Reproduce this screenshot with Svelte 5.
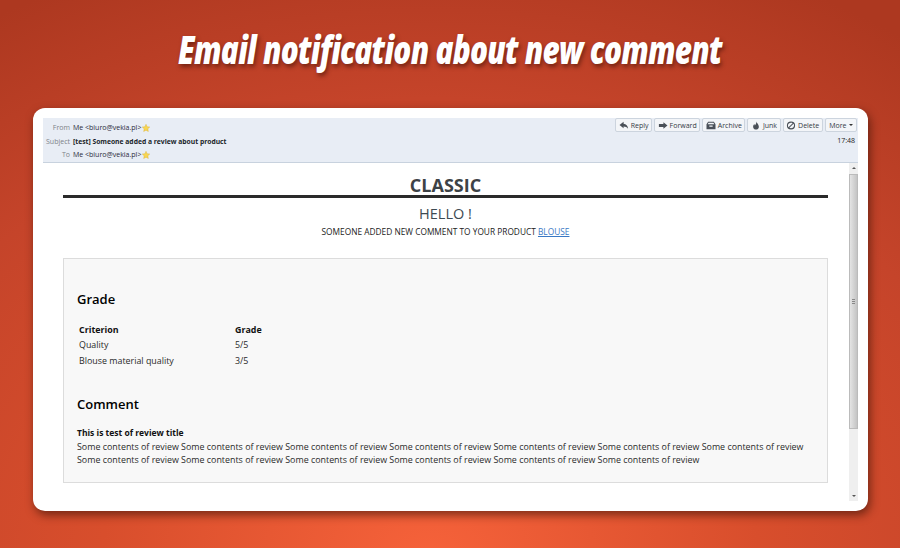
<script>
  const buttons = [
    { label: 'Reply', icon: 'reply' },
    { label: 'Forward', icon: 'forward' },
    { label: 'Archive', icon: 'archive' },
    { label: 'Junk', icon: 'junk' },
    { label: 'Delete', icon: 'delete' }
  ];

  const grades = [
    { name: 'Quality', grade: '5/5' },
    { name: 'Blouse material quality', grade: '3/5' }
  ];

  const line1 = Array(7).fill('Some contents of review').join(' ');
  const line2 = Array(6).fill('Some contents of review').join(' ');
</script>

{#snippet star()}
  <svg class="star" width="8" height="8" viewBox="0 0 10 10">
    <path d="M5 .4 6.4 3.4 9.7 3.8 7.3 6 7.9 9.4 5 7.7 2.1 9.4 2.7 6 .3 3.8 3.6 3.4Z" fill="#f7d654" stroke="#dcae2c" stroke-width=".5" />
  </svg>
{/snippet}

<div class="page">
  <h1>Email notification about new comment</h1>

  <div class="card">
    <div class="mail-head">
      <div class="fields">
        <div class="row"><span class="key">From</span><span class="val">Me &lt;biuro@vekia.pl&gt;</span>{@render star()}</div>
        <div class="row"><span class="key">Subject</span><span class="val subject">[test] Someone added a review about product</span></div>
        <div class="row"><span class="key">To</span><span class="val">Me &lt;biuro@vekia.pl&gt;</span>{@render star()}</div>
      </div>
      <div class="side">
        <div class="buttons">
          {#each buttons as b}
            <div class="btn">
              <svg width="10" height="9" viewBox="0 0 12 11" fill="#4a5058">
                {#if b.icon === 'reply'}
                  <path d="M5.5 1 .5 5 5.5 9V6.6C8 6.6 9.6 7.4 11 9.6 10.8 6 8.6 3.7 5.5 3.4Z" />
                {:else if b.icon === 'forward'}
                  <path d="M6.5 1.5 11.5 5.5 6.5 9.5V7.3H1V3.7H6.5Z" />
                {:else if b.icon === 'archive'}
                  <path d="M2.5 1H9.5L11.5 4V10H.5V4ZM3 2 2 4H10L9 2ZM4 5.5V7H8V5.5Z" fill-rule="evenodd" />
                {:else if b.icon === 'junk'}
                  <path d="M6.5 .5C6.8 2.5 9.5 4 9.5 7 9.5 9 8 10.5 6 10.5S2.5 9 2.5 7C2.5 5.6 3.2 4.6 4 3.8L4.6 5.4C5.6 4.2 6.6 2.5 6.5 .5Z" />
                {:else}
                  <path d="M6 .5A5 5 0 1 0 6 10.5 5 5 0 1 0 6 .5ZM6 2.2C6.7 2.2 7.4 2.4 8 2.8L2.9 7.6C2.5 7.1 2.3 6.3 2.3 5.5 2.3 3.6 4 2.2 6 2.2ZM4 8.3 9.1 3.5C9.5 4 9.7 4.7 9.7 5.5 9.7 7.4 8 8.8 6 8.8 5.2 8.8 4.5 8.6 4 8.3Z" fill-rule="evenodd" />
                {/if}
              </svg>
              {b.label}
            </div>
          {/each}
          <div class="btn more">More <span class="caret"></span></div>
        </div>
        <div class="time">17:48</div>
      </div>
    </div>

    <div class="mail-body">
      <div class="content">
        <div class="brand">CLASSIC</div>
        <div class="hello">HELLO !</div>
        <div class="lead">SOMEONE ADDED NEW COMMENT TO YOUR PRODUCT <a href="#blouse">BLOUSE</a></div>

        <div class="box">
          <h2>Grade</h2>
          <table>
            <thead>
              <tr><th>Criterion</th><th>Grade</th></tr>
            </thead>
            <tbody>
              {#each grades as g}
                <tr><td>{g.name}</td><td>{g.grade}</td></tr>
              {/each}
            </tbody>
          </table>

          <h2 class="comment">Comment</h2>
          <div class="review-title">This is test of review title</div>
          <p>{line1}<br />{line2}</p>
        </div>
      </div>

      <div class="scrollbar">
        <span class="arrow up"></span>
        <div class="track">
          <div class="thumb"><span class="grip"></span></div>
        </div>
        <span class="arrow down"></span>
      </div>
    </div>
  </div>
</div>

<style>
  :global(body) {
    margin: 0;
  }

  .page {
    width: 900px;
    height: 548px;
    box-sizing: border-box;
    padding-top: 108px;
    position: relative;
    overflow: hidden;
    background: radial-gradient(ellipse 820px 640px at 430px 560px, #f6623a 0%, #d84e2c 40%, #c5442a 72%, #ad3820 100%);
    font-family: "Open Sans", sans-serif;
  }

  h1 {
    position: absolute;
    top: 26px;
    left: 0;
    right: 0;
    margin: 0;
    text-align: center;
    color: #fff;
    font-size: 39px;
    line-height: 46px;
    font-weight: 800;
    font-style: italic;
    letter-spacing: -1px;
    white-space: nowrap;
    transform: scaleX(0.763);
    text-shadow: 2px 3px 5px rgba(60, 15, 5, 0.55);
  }

  .card {
    width: 835px;
    height: 403px;
    margin-left: 33px;
    box-sizing: border-box;
    padding: 10px;
    background: #fff;
    border-radius: 12px;
    box-shadow: 2px 4px 10px rgba(50, 15, 5, 0.6);
    display: flex;
    flex-direction: column;
  }

  .mail-head {
    height: 45px;
    box-sizing: border-box;
    background: #e8edf5;
    border-bottom: 1px solid #c8d2de;
    display: flex;
    justify-content: space-between;
    flex: none;
  }

  .fields {
    padding-top: 3px;
  }

  .row {
    display: flex;
    align-items: center;
    height: 13.5px;
    font-size: 7px;
    color: #2a2a3a;
  }

  .key {
    width: 27px;
    margin-right: 3px;
    text-align: right;
    color: #7d8288;
  }

  .subject {
    font-size: 6.75px;
    font-weight: 700;
    color: #1a1f2a;
  }

  .star {
    margin-left: 1px;
  }

  .side {
    display: flex;
    flex-direction: column;
    align-items: flex-end;
  }

  .buttons {
    display: flex;
    gap: 2px;
    padding-right: 1px;
  }

  .btn {
    height: 14px;
    box-sizing: border-box;
    padding: 0 2.5px;
    display: flex;
    align-items: center;
    gap: 2px;
    background: #f3f5f8;
    border: 1px solid #ccd4de;
    border-radius: 2px;
    font-size: 7px;
    color: #333a44;
  }

  .more {
    padding: 0 3.5px;
  }

  .caret {
    width: 0;
    height: 0;
    border: 2.5px solid transparent;
    border-top-color: #333;
    border-bottom: 0;
  }

  .time {
    font-size: 7px;
    color: #222;
    margin-top: 4px;
    padding-right: 3px;
  }

  .mail-body {
    flex: 1;
    min-height: 0;
    display: flex;
  }

  .content {
    flex: 1;
    padding: 0 21px 0 20px;
    color: #222;
  }

  .brand {
    height: 35px;
    box-sizing: border-box;
    border-bottom: 3px solid #2a2a2a;
    padding-top: 10px;
    text-align: center;
    font-size: 18px;
    line-height: 24px;
    font-weight: 700;
    color: #3d4246;
  }

  .hello {
    margin-top: 6px;
    text-align: center;
    font-size: 14.5px;
    line-height: 20px;
    color: #3d4a52;
  }

  .lead {
    margin-top: 1px;
    text-align: center;
    font-size: 8.33px;
    line-height: 14px;
    color: #222;
  }

  .lead a {
    color: #3a78c4;
  }

  .box {
    margin-top: 19px;
    height: 225px;
    box-sizing: border-box;
    padding: 31px 13px 0;
    background: #f8f8f8;
    border: 1px solid #dcdcdc;
  }

  h2 {
    margin: 0;
    font-size: 13px;
    line-height: 18px;
    font-weight: 600;
    color: #000;
  }

  table {
    margin-top: 14px;
    border-collapse: collapse;
    font-size: 8.88px;
    color: #2a2a2a;
  }

  th {
    font-weight: 700;
    text-align: left;
    color: #111;
  }

  th,
  td {
    height: 15.5px;
    padding: 0 2px;
  }

  th:first-child,
  td:first-child {
    width: 152px;
  }

  .comment {
    margin-top: 26px;
  }

  .review-title {
    margin-top: 13px;
    font-size: 8.5px;
    line-height: 13px;
    font-weight: 700;
    color: #111;
  }

  p {
    margin: 0;
    padding-top: 2px;
    font-size: 8.88px;
    line-height: 13px;
    color: #2a2a2a;
    white-space: nowrap;
  }

  .scrollbar {
    width: 9px;
    background: #efefef;
    display: flex;
    flex-direction: column;
    align-items: center;
    flex: none;
  }

  .arrow {
    flex: none;
    width: 0;
    height: 0;
    margin: 4px 0;
    border: 2.5px solid transparent;
  }

  .arrow.up {
    border-top: 0;
    border-bottom-color: #555;
  }

  .arrow.down {
    border-bottom: 0;
    border-top-color: #555;
  }

  .track {
    flex: 1;
    width: 100%;
    padding-top: 1px;
  }

  .thumb {
    height: 255px;
    box-sizing: border-box;
    background: linear-gradient(to right, #e4e4e4, #c4c4c4);
    border: 1px solid #bbb;
    display: flex;
    align-items: center;
    justify-content: center;
  }

  .grip {
    width: 3px;
    height: 5px;
    background: repeating-linear-gradient(#888 0 1px, transparent 1px 2px);
  }
</style>
